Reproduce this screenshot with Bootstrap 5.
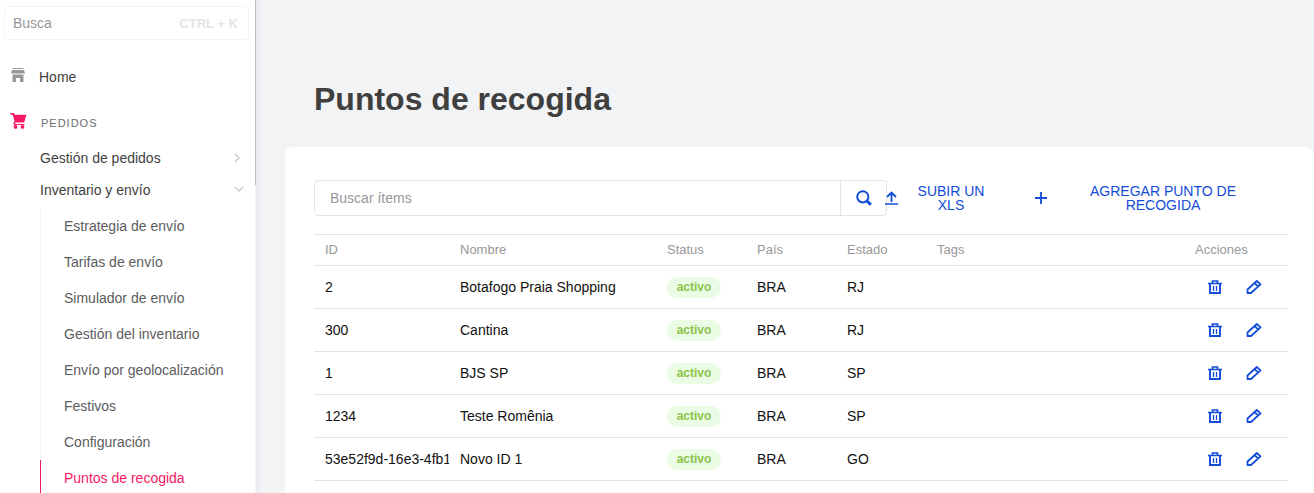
<!DOCTYPE html>
<html lang="es">
<head>
<meta charset="utf-8">
<meta name="viewport" content="width=device-width, initial-scale=1">
<title>Puntos de recogida</title>
<link href="https://cdn.jsdelivr.net/npm/bootstrap@5.3.0/dist/css/bootstrap.min.css" rel="stylesheet">
<style>
  body { font-family: "Liberation Sans", Arial, sans-serif; font-size: 14px; line-height: 20px; background: #f2f3f5; color: #3f3f40; }
  a { text-decoration: none; color: inherit; }
  .side { width: 256px; background: #fff; border-right: 1px solid #f2f4f5; }
  .side-thumb { top: 0; right: -1px; width: 1px; height: 185px; background: #bdbdbd; }
  .side-track { width: 4px; background: #ebedf0; }
  .side-search { margin: 6px 6px 0 4px; height: 34px; border: 1px solid #f2f4f5; border-radius: 4px; padding: 0 10px 0 8px; }
  .side-search input { width: 0; border: 0; outline: 0; background: none; min-width: 0; padding: 0; color: #979899; }
  .side-search input::placeholder { color: #979899; opacity: 1; }
  .side-search kbd { background: none; color: #e3e4e6; padding: 0; font: bold 13px "Liberation Sans", Arial, sans-serif; white-space: nowrap; }
  .home-link { margin-top: 26px; padding-left: 11px; gap: 14px; height: 22px; }
  .section-head { margin-top: 22px; padding-left: 10px; gap: 14px; height: 26px; }
  .section-head span { font-size: 11px; color: #6b6c6e; letter-spacing: 1px; }
  .groups { margin-top: 6px; padding-left: 40px; }
  .group-link { height: 32px; padding-right: 10px; }
  .sub-list { margin-top: 2px; }
  .sub-list a { display: flex; align-items: center; height: 36px; padding-left: 23px; border-left: 1px solid #f2f4f5; color: #5b5c5e; }
  .sub-list a.current { color: #f71963; border-color: #f71963; }
  .content { padding: 79px 0 0 25px; min-width: 0; }
  .page-title { font-size: 32px; line-height: 40px; font-weight: 700; padding-left: 29px; margin: 0 0 28px; }
  .panel { background: #fff; border-radius: 8px; padding: 33px 26px 24px 29px; }
  .find-box { width: 573px; height: 36px; border: 1px solid #e3e4e6; border-radius: 4px; }
  .find-box input { border: 0; outline: 0; padding: 0 15px; min-width: 0; background: none; color: #3f3f40; }
  .find-box input::placeholder { color: #979899; opacity: 1; }
  .find-box button { width: 46px; border: 0; border-left: 1px solid #e3e4e6; background: none; padding: 0; }
  .tool-btn { border: 0; background: none; color: #134cd8; padding: 0; line-height: 14px; height: 36px; text-transform: uppercase; }
  .upload-btn { margin-left: -2px; width: 102px; gap: 17px; }
  .upload-btn span { width: 72px; }
  .add-btn { margin-left: 48px; width: 204px; gap: 40px; }
  .add-btn span { width: 154px; }
  .points { table-layout: fixed; width: 100%; margin-top: 18px; color: #111; }
  .points th { font-size: 13px; font-weight: 400; color: #979899; height: 31px; }
  .points th, .points td { padding: 0 0 0 11px; border-bottom: 1px solid #e3e4e6; white-space: nowrap; }
  .points td { height: 43px; }
  .points thead tr { border-top: 1px solid #e3e4e6; }
  .points .clip { overflow: hidden; }
  .c-id { width: 135px; } .c-name { width: 207px; } .c-short { width: 90px; } .c-act { width: 104px; }
  .state { display: block; width: 54px; height: 21px; border-radius: 11px; background: #eafce3; color: #8bc34a; font-size: 12px; font-weight: 700; line-height: 20px; text-align: center; }
  .row-btn { border: 0; background: none; padding: 0; display: flex; color: #134cd8; }
  .row-btns { gap: 24px; padding-left: 13px; }
</style>
</head>
<body>
<div class="d-flex min-vh-100 vh-100 overflow-hidden">
  <nav class="side position-relative flex-shrink-0">
    <div class="side-thumb position-absolute"></div>
    <div class="side-search d-flex align-items-center">
      <input class="flex-grow-1" type="text" placeholder="Busca" aria-label="Busca"><kbd>CTRL + K</kbd>
    </div>
    <a href="#" class="home-link d-flex align-items-center">
      <svg class="mb-1" width="14" height="14" viewBox="0 0 14 14" fill="#979899"><path d="M1.500 0h11v1h-11zM1 2h12l1 3.500H0zM1.500 6.500h11V14H9v-4H5v4H1.500z"/></svg>
      <span>Home</span>
    </a>
    <div class="section-head d-flex align-items-center">
      <svg class="mb-1" width="17" height="16" viewBox="0 0 16 16" fill="#f71963"><path d="M0 0h3.500l.8 1.800H16L13.600 9.500H4.900l-.6 1.400H14v1H3.500L2.800 10l1.300-1.500L2.200 1.800H0z"/><circle cx="5" cy="13.900" r="1.900"/><circle cx="12" cy="13.900" r="1.900"/></svg>
      <span>PEDIDOS</span>
    </div>
    <div class="groups">
      <a href="#" class="group-link d-flex align-items-center justify-content-between">Gestión de pedidos
        <svg width="14" height="12" viewBox="0 0 14 12" fill="none" stroke="#cacbcc" stroke-width="1.500"><path d="M4 2l4 4-4 4"/></svg></a>
      <a href="#" class="group-link d-flex align-items-center justify-content-between">Inventario y envío
        <svg width="12" height="12" viewBox="0 0 12 12" fill="none" stroke="#cacbcc" stroke-width="1.500"><path d="M2 3l4 4 4-4"/></svg></a>
      <div class="sub-list">
        <a href="#">Estrategia de envío</a>
        <a href="#">Tarifas de envío</a>
        <a href="#">Simulador de envío</a>
        <a href="#">Gestión del inventario</a>
        <a href="#">Envío por geolocalización</a>
        <a href="#">Festivos</a>
        <a href="#">Configuración</a>
        <a href="#" class="current">Puntos de recogida</a>
      </div>
    </div>
  </nav>
  <div class="side-track flex-shrink-0"></div>
  <main class="content flex-grow-1">
    <h1 class="page-title">Puntos de recogida</h1>
    <section class="panel">
      <div class="d-flex">
        <div class="find-box d-flex">
          <input class="flex-grow-1" type="text" placeholder="Buscar ítems" aria-label="Buscar ítems">
          <button type="button" aria-label="Buscar" class="d-flex align-items-center justify-content-center">
            <svg width="16" height="16" viewBox="0 0 16 16" fill="none" stroke="#134cd8"><circle cx="6.800" cy="6.800" r="5.600" stroke-width="2"/><path d="M10.800 10.800l4 4" stroke-width="3"/></svg>
          </button>
        </div>
        <button type="button" class="tool-btn upload-btn d-flex align-items-center">
          <svg class="flex-shrink-0" width="13" height="14" viewBox="0 0 13 14" fill="none" stroke="currentColor" stroke-width="2"><path d="M6.500 11V1.500M2 6l4.500-4.500L11 6" stroke-width="1.800"/><path d="M0 13h13" stroke-width="1.500"/></svg>
          <span>Subir un XLS</span>
        </button>
        <button type="button" class="tool-btn add-btn d-flex align-items-center">
          <svg class="flex-shrink-0" width="12" height="12" viewBox="0 0 12 12" fill="none" stroke="currentColor"><path d="M6 0v12M0 6h12" stroke-width="1.800"/></svg>
          <span>Agregar punto de recogida</span>
        </button>
      </div>
      <table class="points">
        <colgroup><col class="c-id"><col class="c-name"><col class="c-short"><col class="c-short"><col class="c-short"><col><col class="c-act"></colgroup>
        <thead><tr><th>ID</th><th>Nombre</th><th>Status</th><th>País</th><th>Estado</th><th>Tags</th><th>Acciones</th></tr></thead>
        <tbody id="rows"></tbody>
      </table>
    </section>
  </main>
</div>
<script src="https://cdn.jsdelivr.net/npm/bootstrap@5.3.0/dist/js/bootstrap.bundle.min.js"></script>
<script>
  const points = [
    ['2', 'Botafogo Praia Shopping', 'RJ'],
    ['300', 'Cantina', 'RJ'],
    ['1', 'BJS SP', 'SP'],
    ['1234', 'Teste Romênia', 'SP'],
    ['53e52f9d-16e3-4fb1', 'Novo ID 1', 'GO']
  ];
  document.getElementById('rows').innerHTML = points.map(([id, name, state]) => `
    <tr>
      <td><div class="clip">${id}</div></td><td>${name}</td><td><span class="state">activo</span></td><td>BRA</td><td>${state}</td><td></td>
      <td><div class="row-btns d-flex">
        <button type="button" class="row-btn" aria-label="Eliminar"><svg width="14" height="14" viewBox="0 0 14 14" fill="none" stroke="currentColor"><path d="M0 3.500h14M4.500 3V1h5v2" stroke-width="1.700"/><path d="M2 4v9h10V4" stroke-width="1.900"/><path d="M5.500 6v5M8.500 6v5" stroke-width="1.300"/></svg></button>
        <button type="button" class="row-btn" aria-label="Editar"><svg width="16" height="14" viewBox="0 0 16 14" fill="none" stroke="currentColor" stroke-width="1.800" stroke-linejoin="round"><path d="M1.500 13V9.500L10.800 1l3.700 3.300L5 13zM8.500 3.200L12.200 6.500"/></svg></button>
      </div></td>
    </tr>`).join('');
</script>
</body>
</html>
